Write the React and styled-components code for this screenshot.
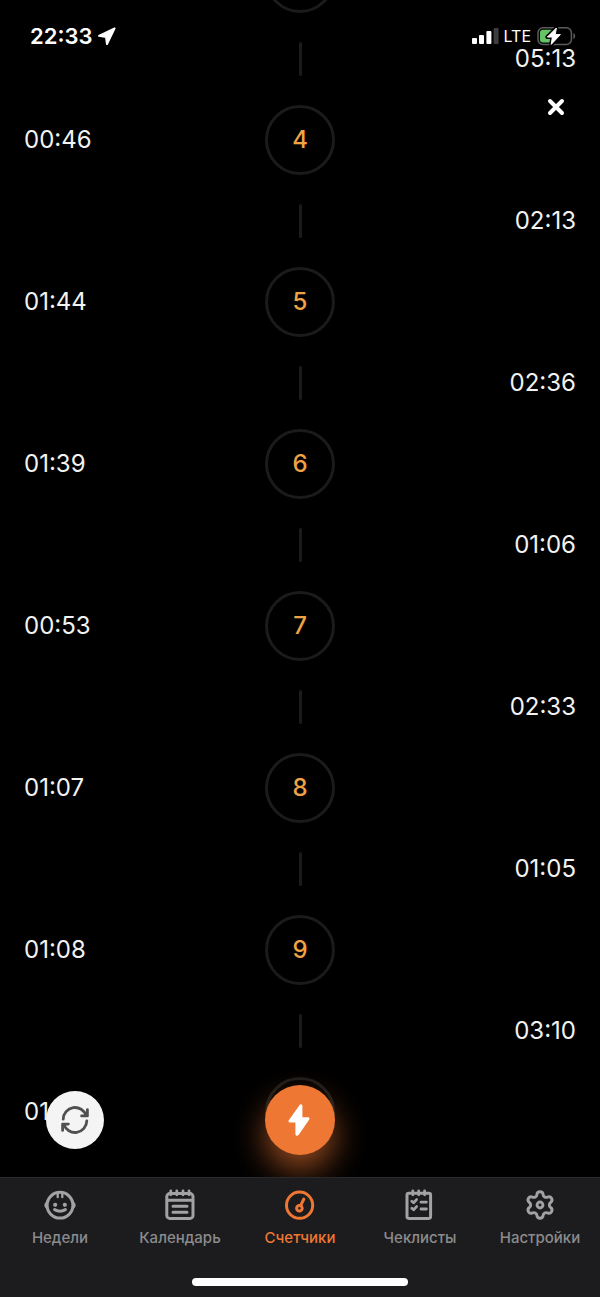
import React from "react";
import styled, { ThemeProvider, createGlobalStyle } from "styled-components";

const theme = {
	colors: {
		background: "#000000",
		panel: "#1c1c1e",
		panelBorder: "#2a2a2c",
		track: "#1b1b1b",
		text: "#f2f2f2",
		muted: "#8b8b8d",
		icon: "#a2a2a4",
		number: "#f0a344",
		accent: "#ee7733",
	},
};

const GlobalStyle = createGlobalStyle`
	* {
		box-sizing: border-box;
	}

	body {
		margin: 0;
		background-color: #000000;
		font-family: Inter, "Liberation Sans", sans-serif;
	}
`;

const Screen = styled.div`
	display: flex;
	flex-direction: column;
	min-height: 100vh;
	position: relative;
	background-color: ${({ theme }) => theme.colors.background};
	color: ${({ theme }) => theme.colors.text};
`;

/* Floats above the scrolled timeline */
const StatusBar = styled.header`
	position: absolute;
	top: 0;
	left: 0;
	right: 0;
	z-index: 2;
	display: flex;
	align-items: center;
	justify-content: space-between;
	padding: 22px 24px 0 30px;
	color: #ffffff;
`;

const StatusGroup = styled.div`
	display: flex;
	align-items: center;
	gap: 5px;
	height: 28px;

	svg {
		display: block;
	}
`;

const Clock = styled.time`
	font-size: 22px;
	font-weight: 600;
	line-height: 28px;
`;

const Network = styled.span`
	font-size: 16px;
	line-height: 28px;
`;

const CloseButton = styled.button`
	position: absolute;
	top: 91px;
	right: 28px;
	z-index: 2;
	display: grid;
	place-items: center;
	width: 32px;
	height: 32px;
	padding: 0;
	border: none;
	background: none;
	color: #ffffff;
	cursor: pointer;
`;

const Main = styled.main`
	flex: 1;
	position: relative;
	overflow: hidden;
`;

/* Scrolled a little past its start */
const Timeline = styled.ol`
	margin: -63px 0 0;
	padding: 0 24px;
	list-style: none;
`;

const Row = styled.div`
	display: grid;
	grid-template-columns: 1fr auto 1fr;
	align-items: center;
	height: ${({ $tall }) => ($tall ? "82px" : "80px")};
`;

const Duration = styled.span`
	grid-column: 1;
	font-size: 24px;
	line-height: 32px;
`;

const Interval = styled.span`
	grid-column: 3;
	justify-self: end;
	font-size: 24px;
	line-height: 32px;
`;

const Bubble = styled.span`
	grid-column: 2;
	display: grid;
	place-items: center;
	width: 70px;
	height: 70px;
	border: 3px solid ${({ theme }) => theme.colors.track};
	border-radius: 50%;
	color: ${({ theme }) => theme.colors.number};
	font-size: 24px;
	font-weight: 500;
	line-height: 32px;
`;

const Connector = styled.span`
	grid-column: 2;
	width: 3px;
	height: 34px;
	border-radius: 2px;
	background-color: ${({ theme }) => theme.colors.track};
`;

const Actions = styled.div`
	position: absolute;
	left: 0;
	right: 0;
	bottom: 22px;
	display: grid;
	grid-template-columns: 1fr auto 1fr;
	align-items: center;
	padding: 0 46px;
`;

const RoundButton = styled.button`
	display: grid;
	place-items: center;
	width: 58px;
	height: 58px;
	padding: 0;
	border: none;
	border-radius: 50%;
	background-color: #f4f4f4;
	color: #505050;
	cursor: pointer;
`;

const StartButton = styled(RoundButton)`
	width: 70px;
	height: 70px;
	background-color: ${({ theme }) => theme.colors.accent};
	color: #ffffff;
	box-shadow: 0 16px 32px rgba(238, 119, 51, 0.6);
`;

const Footer = styled.footer`
	position: relative;
	padding-bottom: 11px;
	border-top: 1px solid ${({ theme }) => theme.colors.panelBorder};
	background-color: ${({ theme }) => theme.colors.panel};
`;

const Tabs = styled.nav`
	display: grid;
	grid-template-columns: repeat(5, 1fr);
	padding-top: 11px;
`;

const Tab = styled.a`
	display: flex;
	flex-direction: column;
	align-items: center;
	gap: 7px;
	color: ${({ theme, $active }) =>
		$active ? theme.colors.accent : theme.colors.muted};
	font-size: 15px;
	font-weight: 500;
	line-height: 20px;
	text-decoration: none;

	svg {
		width: 32px;
		height: 32px;
		color: ${({ theme, $active }) =>
			$active ? theme.colors.accent : theme.colors.icon};
	}
`;

const HomeIndicator = styled.div`
	width: 36%;
	height: 8px;
	margin: 30px auto 0;
	border-radius: 4px;
	background-color: #ffffff;
`;

const LineIcon = ({ size = 32, width = 3, children }) => (
	<svg
		width={size}
		height={size}
		viewBox={`0 0 ${size} ${size}`}
		fill="none"
		stroke="currentColor"
		strokeWidth={width}
		strokeLinecap="round"
		strokeLinejoin="round"
		aria-hidden="true"
	>
		{children}
	</svg>
);

const BabyIcon = () => (
	<LineIcon>
		<circle cx="16" cy="16.2" r="12.9" />
		<path d="M3 13.4Q1.4 15 1.4 16.4T3.2 19M29 13.4Q30.6 15 30.6 16.4T28.8 19" strokeWidth="2.2" />
		<path d="M13.7 4v4.2M18.3 4v4.2" strokeWidth="2.3" />
		<path d="M10.6 20.6q5.4 3.2 10.8 0" />
		<circle cx="11.2" cy="15.8" r="2.1" fill="currentColor" stroke="none" />
		<circle cx="20.8" cy="15.8" r="2.1" fill="currentColor" stroke="none" />
	</LineIcon>
);

const CalendarIcon = () => (
	<LineIcon>
		<rect x="2.8" y="4.6" width="26.2" height="24.8" rx="3" />
		<path d="M3.5 11.2h25M9 17.2h14M9 23.2h14" />
		<path d="M6.8 1.8v4M12.8 1.8v4M19 1.8v4M25 1.8v4" strokeWidth="2.8" />
	</LineIcon>
);

const GaugeIcon = () => (
	<LineIcon>
		<circle cx="15.6" cy="16.2" r="13.1" />
		<circle cx="15.4" cy="19.2" r="2.8" />
		<path d="M16.8 16.4L19.8 10" />
	</LineIcon>
);

const ChecklistIcon = () => (
	<LineIcon>
		<rect x="3" y="4.2" width="23.6" height="25.2" rx="1.8" />
		<path d="M8.8 1.8v4M14.7 1.8v4M20.6 1.8v4" strokeWidth="2.8" />
		<path d="M7.8 12.2l1.8 1.6 3-3.2M7.8 19.2l1.8 1.6 3-3.2M17 13.2h5.4M17 20h5.4" strokeWidth="2.8" />
	</LineIcon>
);

const GearIcon = () => (
	<svg
		viewBox="0 0 24 24"
		fill="none"
		stroke="currentColor"
		strokeWidth="2.2"
		strokeLinecap="round"
		strokeLinejoin="round"
		aria-hidden="true"
	>
		<path d="M9.671 4.136a2.34 2.34 0 0 1 4.659 0 2.34 2.34 0 0 0 3.319 1.915 2.34 2.34 0 0 1 2.33 4.033 2.34 2.34 0 0 0 0 3.831 2.34 2.34 0 0 1-2.33 4.033 2.34 2.34 0 0 0-3.319 1.915 2.34 2.34 0 0 1-4.659 0 2.34 2.34 0 0 0-3.32-1.915 2.34 2.34 0 0 1-2.33-4.033 2.34 2.34 0 0 0 0-3.831A2.34 2.34 0 0 1 6.35 6.051a2.34 2.34 0 0 0 3.319-1.915" />
		<circle cx="12" cy="12" r="2.2" />
	</svg>
);

const RefreshIcon = () => (
	<LineIcon size={30} width={2.8}>
		<path d="M3.2 14.2A11.8 11.8 0 0 1 26.2 10.6M27.4 4.6v6.3h-5.8" />
		<path d="M26.8 15.8A11.8 11.8 0 0 1 3.8 19.4M2.6 25.4v-6.3h5.8" />
	</LineIcon>
);

const BoltIcon = () => (
	<svg width="36" height="36" viewBox="0 0 36 36" aria-hidden="true">
		<path
			d="M18.6 3.4L7.6 18.8Q7.2 19.6 8 19.6H14.4V32.2Q14.8 33.4 15.8 32.4L26.4 17Q26.8 16.2 26 16.2H19.4V3.8Q19.2 3 18.6 3.4Z"
			fill="currentColor"
			stroke="currentColor"
			strokeWidth="2"
			strokeLinejoin="round"
		/>
	</svg>
);

const LocationIcon = () => (
	<svg width="20" height="20" viewBox="0 0 20 20" aria-hidden="true">
		<path
			d="M17.6 2.4L2 9.8L9 10.9L10 18Z"
			fill="#ffffff"
			stroke="#ffffff"
			strokeWidth="2"
			strokeLinejoin="round"
		/>
	</svg>
);

const SignalIcon = () => (
	<svg width="27" height="18" viewBox="0 0 27 18" aria-hidden="true">
		<rect x="0" y="11" width="5" height="6" rx="1" fill="#ffffff" />
		<rect x="7" y="8" width="5" height="9" rx="1" fill="#ffffff" />
		<rect x="14.4" y="4" width="5" height="13" rx="1" fill="#ffffff" />
		<rect x="21.6" y="1" width="5" height="16" rx="1" fill="#3d3d3d" />
	</svg>
);

const BatteryIcon = () => (
	<svg width="40" height="20" viewBox="0 0 40 20" aria-hidden="true">
		<rect x="2" y="1.8" width="33.4" height="16.6" rx="5" fill="none" stroke="#5c5c5c" strokeWidth="1.5" />
		<path d="M37.4 7v6.2q1.8-.8 1.8-3.1t-1.8-3.1Z" fill="#5c5c5c" />
		<rect x="4" y="3.8" width="14" height="12.6" rx="3" fill="#65c466" />
		<path
			d="M20.4 2L11.4 11H16.4L15.2 18.4L24.4 8.6H19.2Z"
			fill="#ffffff"
			stroke="#000000"
			strokeWidth="4"
			strokeLinejoin="round"
		/>
		<path
			d="M20.4 2L11.4 11H16.4L15.2 18.4L24.4 8.6H19.2Z"
			fill="#ffffff"
			stroke="#ffffff"
			strokeWidth="1"
			strokeLinejoin="round"
		/>
	</svg>
);

/* The first entry is scrolled almost out of view, only its ring shows */
const contractions = [
	{ id: 3, interval: "05:13" },
	{ id: 4, number: 4, duration: "00:46", interval: "02:13" },
	{ id: 5, number: 5, duration: "01:44", interval: "02:36" },
	{ id: 6, number: 6, duration: "01:39", interval: "01:06" },
	{ id: 7, number: 7, duration: "00:53", interval: "02:33" },
	{ id: 8, number: 8, duration: "01:07", interval: "01:05" },
	{ id: 9, number: 9, duration: "01:08", interval: "03:10" },
	{ id: 10, duration: "01" },
];

const tabs = [
	{ id: "weeks", label: "Недели", icon: <BabyIcon /> },
	{ id: "calendar", label: "Календарь", icon: <CalendarIcon /> },
	{ id: "counters", label: "Счетчики", icon: <GaugeIcon />, active: true },
	{ id: "checklists", label: "Чеклисты", icon: <ChecklistIcon /> },
	{ id: "settings", label: "Настройки", icon: <GearIcon /> },
];

const App = () => {
	return (
		<ThemeProvider theme={theme}>
			<GlobalStyle />
			<Screen>
				<StatusBar>
					<StatusGroup>
						<Clock>22:33</Clock>
						<LocationIcon />
					</StatusGroup>
					<StatusGroup>
						<SignalIcon />
						<Network>LTE</Network>
						<BatteryIcon />
					</StatusGroup>
				</StatusBar>
				<CloseButton type="button" aria-label="Закрыть">
					<LineIcon size={20} width={4}>
						<path d="M4 4l12 12M16 4L4 16" />
					</LineIcon>
				</CloseButton>
				<Main>
					<Timeline>
						{contractions.map(({ id, number, duration, interval }) => (
							<li key={id}>
								<Row $tall>
									{duration && <Duration>{duration}</Duration>}
									<Bubble>{number}</Bubble>
								</Row>
								{interval && (
									<Row>
										<Connector />
										<Interval>{interval}</Interval>
									</Row>
								)}
							</li>
						))}
					</Timeline>
					<Actions>
						<RoundButton type="button" aria-label="Сбросить">
							<RefreshIcon />
						</RoundButton>
						<StartButton type="button" aria-label="Начать">
							<BoltIcon />
						</StartButton>
					</Actions>
				</Main>
				<Footer>
					<Tabs>
						{tabs.map(({ id, label, icon, active }) => (
							<Tab
								key={id}
								href={`#${id}`}
								$active={active}
								aria-current={active ? "page" : undefined}
							>
								{icon}
								{label}
							</Tab>
						))}
					</Tabs>
					<HomeIndicator />
				</Footer>
			</Screen>
		</ThemeProvider>
	);
};

export default App;
